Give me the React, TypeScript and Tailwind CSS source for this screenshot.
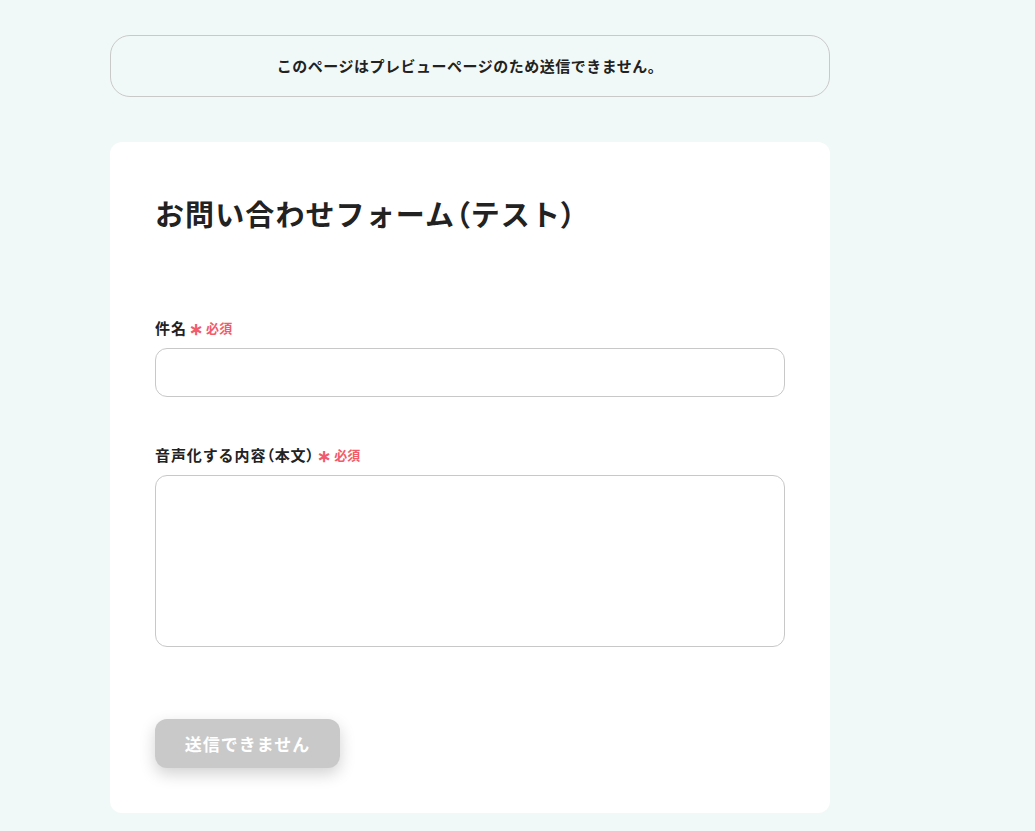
import React from "react";

const font = { fontFamily: '"Noto Sans CJK JP", "Noto Sans", sans-serif' };

function P({ children }: { children: React.ReactNode }) {
  return <span className="[font-feature-settings:'palt']">{children}</span>;
}

function Required() {
  return (
    <span className="ml-[2px] inline-flex items-center text-[13px] font-bold tracking-[0.2px] text-[#f25b6b]">
      <span className="mr-[3px] text-[17px] leading-none">∗</span>必須
    </span>
  );
}

export default function App() {
  return (
    <div
      className="min-h-[831px] w-full bg-[#f1f9f8] pt-[35px] pb-[18px] text-[#222]"
      style={font}
    >
      <div className="ml-[110px] w-[720px]">
        <div className="flex h-[62px] items-center justify-center rounded-[20px] border border-[#c9c9c9] text-[15px] font-bold tracking-[0.5px] text-[#222]">
          このページはプレビューページのため送信できません。
        </div>

        <div className="mt-[45px] flex flex-col rounded-[12px] bg-white px-[45px] pt-[50px] pb-[45px]">
          <h1 className="text-[29px] font-bold leading-[42px] tracking-[1.1px] text-[#222]">
            お問い合わせフォーム<P>（</P>テスト<P>）</P>
          </h1>

          <div className="mt-[83px] flex items-center text-[15px] font-bold leading-[21px] tracking-[0.9px]">
            件名
            <Required />
          </div>
          <input
            className="mt-[10px] h-[49px] w-[630px] rounded-[12px] border border-[#c8c8c8] bg-white px-3 outline-none"
            type="text"
          />

          <div className="mt-[47px] flex items-center text-[15px] font-bold leading-[21px] tracking-[0.9px]">
            音声化する内容<P>（</P>本文<P>）</P>
            <Required />
          </div>
          <textarea className="mt-[10px] h-[172px] w-[630px] resize-none rounded-[12px] border border-[#c8c8c8] bg-white px-3 py-2 outline-none" />

          <button className="mt-[72px] h-[49px] w-[185px] rounded-[12px] bg-[#c9c9c9] text-[17px] font-bold tracking-[1px] text-white shadow-[0_6px_16px_rgba(0,0,0,0.18)]">
            送信できません
          </button>
        </div>
      </div>
    </div>
  );
}
